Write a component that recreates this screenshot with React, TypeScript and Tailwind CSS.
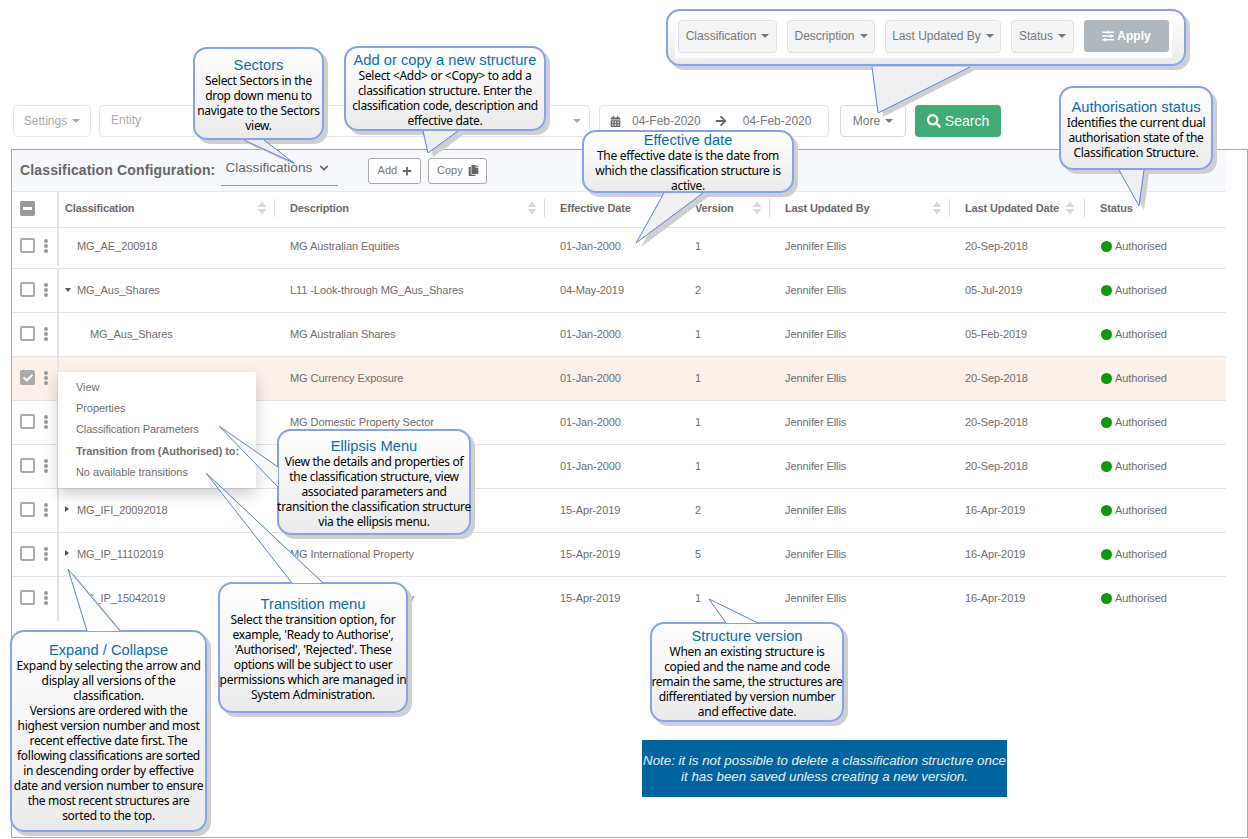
import React from 'react'
import { FaArrowRight, FaCalendarAlt, FaCheck, FaChevronDown, FaCopy, FaPlus, FaSearch, FaSlidersH } from 'react-icons/fa'

const rows = [
  { name: 'MG_AE_200918', indent: 'pl-[18px]', desc: 'MG Australian Equities', eff: '01-Jan-2000', ver: '1', upd: '20-Sep-2018' },
  { name: 'MG_Aus_Shares', arrow: 'down', indent: 'pl-[18px]', desc: 'L11 -Look-through MG_Aus_Shares', eff: '04-May-2019', ver: '2', upd: '05-Jul-2019' },
  { name: 'MG_Aus_Shares', indent: 'pl-[31px]', desc: 'MG Australian Shares', eff: '01-Jan-2000', ver: '1', upd: '05-Feb-2019' },
  { name: '', indent: 'pl-[18px]', desc: 'MG Currency Exposure', eff: '01-Jan-2000', ver: '1', upd: '20-Sep-2018', selected: true },
  { name: '', indent: 'pl-[18px]', desc: 'MG Domestic Property Sector', eff: '01-Jan-2000', ver: '1', upd: '20-Sep-2018' },
  { name: '', indent: 'pl-[18px]', desc: '', eff: '01-Jan-2000', ver: '1', upd: '20-Sep-2018' },
  { name: 'MG_IFI_20092018', arrow: 'right', indent: 'pl-[18px]', desc: '', eff: '15-Apr-2019', ver: '2', upd: '16-Apr-2019' },
  { name: 'MG_IP_11102019', arrow: 'right', indent: 'pl-[18px]', desc: 'MG International Property', eff: '15-Apr-2019', ver: '5', upd: '16-Apr-2019' },
  { name: 'MG_IP_15042019', indent: 'pl-[18px]', desc: 'MG International Property', eff: '15-Apr-2019', ver: '1', upd: '16-Apr-2019' },
]

const gridCols = 'grid grid-cols-[45px_218px_270px_135px_90px_180px_135px_141px]'

function Caret() {
  return <span className="ml-[5px] inline-block h-0 w-0 border-x-[4px] border-t-[4px] border-x-transparent border-t-current align-middle" />
}

function Kebab() {
  return (
    <span className="flex flex-col gap-[1px]">
      <span className="h-[4px] w-[4px] rounded-full bg-[#999]" />
      <span className="h-[4px] w-[4px] rounded-full bg-[#999]" />
      <span className="h-[4px] w-[4px] rounded-full bg-[#999]" />
    </span>
  )
}

function SortIcon() {
  return (
    <svg width="10" height="14" viewBox="0 0 10 14" className="shrink-0">
      <path d="M5 0.5 L9.5 6 L0.5 6 Z M0.5 8 L9.5 8 L5 13.5 Z" fill="#d8d8d8" />
    </svg>
  )
}

function HeaderCell({ label, first, sort = true, sortGap = 'pr-[7px]' }: { label: string; first?: boolean; sort?: boolean; sortGap?: string }) {
  return (
    <div className={`flex h-[35px] items-center pb-[3px] ${first ? 'border-l-2 border-[#e4e4e4] pl-[6px]' : 'pl-[15px]'}`}>
      <div className={`flex h-[18px] flex-1 items-center justify-between ${sort ? 'border-r border-[#dcdcdc]' : ''} ${sortGap}`}>
        <span className="text-[11px] font-bold tracking-[-0.15px] text-[#6b6b6b]">{label}</span>
        {sort && <SortIcon />}
      </div>
    </div>
  )
}

function Tail({ pts, fill, line }: { pts: number[][]; fill: string; line: string }) {
  const [a, b, tip] = pts
  const tri = `${a[0]},${a[1]} ${tip[0]},${tip[1]} ${b[0]},${b[1]}`
  return (
    <svg className="pointer-events-none absolute inset-0 h-[839px] w-[1248px]" viewBox="0 0 1248 839">
      <polygon points={tri} fill={fill} />
      <polyline points={tri} fill="none" stroke={line} strokeWidth="1" />
    </svg>
  )
}

function TailShadow({ pts }: { pts: number[][] }) {
  const s = pts.map((p) => `${p[0] + 5},${p[1] + 4}`).join(' ')
  return (
    <svg className="pointer-events-none absolute inset-0 h-[839px] w-[1248px]" viewBox="0 0 1248 839">
      <polygon points={s} fill="#cfcfcf" />
    </svg>
  )
}

function Callout({ box, title, lines, pts, fill }: { box: string; title: string; lines: string[]; pts: number[][]; fill: string }) {
  return (
    <>
      <TailShadow pts={pts} />
      <div className={`absolute flex flex-col items-center justify-center rounded-[14px] border-2 border-[#86a2ee] bg-linear-to-b from-white to-[#ebebeb] pt-[1px] text-center whitespace-nowrap shadow-[4px_4px_0_#cfcfcf] ${box}`}>
        <div className="pt-[2px] font-['Liberation_Sans',sans-serif] text-[14.7px] leading-[15px] text-[#0a6cb0]">{title}</div>
        {lines.map((l, i) => (
          <div key={i} className="font-['Noto_Sans',sans-serif] text-[12px] leading-[15px] tracking-[-0.3px] text-black">{l}</div>
        ))}
      </div>
      <Tail pts={pts} fill={fill} line="#5b7fe4" />
    </>
  )
}

function FilterButton({ label, className }: { label: string; className: string }) {
  return (
    <div className={`flex h-[33px] items-center justify-center rounded border border-[#dfe1e3] bg-[#f3f4f5] pb-[2px] text-[12px] text-[#777] ${className}`}>
      {label}
      <Caret />
    </div>
  )
}

export default function App() {
  return (
    <div className="relative h-[839px] w-[1248px] overflow-hidden bg-white font-['Liberation_Sans',sans-serif]">
      <div className="flex items-start pl-[13px] pt-[105px]">
        <div className="flex h-[32px] w-[78px] items-center justify-center rounded border border-[#e6e6e6] text-[12px] text-[#aaa]">
          Settings
          <Caret />
        </div>
        <div className="ml-[8px] flex h-[32px] w-[491px] items-center justify-between rounded border border-[#e6e6e6] pl-[11px] pr-[8px] text-[12px] text-[#aaa]">
          <span className="-mt-[2px]">Entity</span>
          <Caret />
        </div>
        <div className="ml-[9px] flex h-[32px] w-[230px] items-center rounded border border-[#e6e6e6] pl-[10px] text-[12px] text-[#777]">
          <FaCalendarAlt className="h-[11px] w-[11px] text-[#666]" />
          <span className="ml-[11px]">04-Feb-2020</span>
          <FaArrowRight className="ml-[14px] h-[12px] w-[12px] text-[#666]" />
          <span className="ml-[16px]">04-Feb-2020</span>
        </div>
        <div className="ml-[11px] flex h-[32px] w-[66px] items-center justify-center rounded border border-[#d8d8d8] text-[12px] text-[#777]">
          More
          <Caret />
        </div>
        <div className="ml-[9px] flex h-[32px] w-[86px] items-center justify-center gap-[4px] rounded bg-[#41ab77] text-[14px] text-white">
          <FaSearch className="h-[14px] w-[14px]" />
          Search
        </div>
      </div>

      <div className="ml-[11px] mt-[12px] h-[689px] border border-[#a9a9a9] pr-[21px]">
        <div className="flex h-[42px] items-center border-b border-[#e8e8e8] bg-[#f7f8fb] pl-[8px]">
          <span className="text-[14px] font-bold tracking-[0.14px] text-[#666]">Classification Configuration:</span>
          <div className="ml-[6px] flex h-[30px] w-[117px] items-center gap-[7px] border-b border-[#999] pb-[4px] pl-[4px] text-[13.6px] text-[#666]">
            Classifications
            <FaChevronDown className="h-[10px] w-[10px]" />
          </div>
          <div className="ml-[30px] flex h-[26px] w-[53px] items-center justify-center gap-[5px] rounded-[3px] border border-[#aaa] bg-white text-[11px] text-[#777]">
            Add
            <FaPlus className="h-[10px] w-[10px] text-[#666]" />
          </div>
          <div className="ml-[7px] flex h-[26px] w-[59px] items-center justify-center gap-[5px] rounded-[3px] border border-[#aaa] bg-white text-[11px] text-[#777]">
            Copy
            <FaCopy className="h-[11px] w-[11px] text-[#666]" />
          </div>
        </div>

        <div className={`${gridCols} border-b border-[#e4e4e4]`}>
          <div className="flex h-[35px] items-center pb-[3px] pl-[8px]">
            <span className="flex h-[15px] w-[15px] items-center justify-center rounded-[2px] bg-[#999]">
              <span className="h-[3px] w-[9px] bg-white" />
            </span>
          </div>
          <HeaderCell first label="Classification" />
          <HeaderCell label="Description" />
          <HeaderCell label="Effective Date" />
          <HeaderCell label="Version" />
          <HeaderCell label="Last Updated By" />
          <HeaderCell label="Last Updated Date" sortGap="pr-[9px]" />
          <HeaderCell label="Status" sort={false} />
        </div>

        {rows.map((r, i) => (
          <div
            key={i}
            className={`${gridCols} text-[11px] tracking-[-0.08px] text-[#6e6e6e] ${i === 0 ? 'h-[41px] pb-[3px]' : 'h-[44px]'} ${i < rows.length - 1 ? 'border-b border-[#e4e4e4]' : 'pb-[1px]'} ${r.selected ? 'bg-[#fbf0ea]' : ''}`}
          >
            <div className="flex items-center gap-[5px] pb-[2px] pl-[8px]">
              {r.selected ? (
                <span className="flex h-[15px] w-[15px] items-center justify-center rounded-[2px] bg-[#aaa]">
                  <FaCheck className="h-[10px] w-[10px] text-white" />
                </span>
              ) : (
                <span className="h-[15px] w-[15px] rounded-[2px] border-2 border-[#aaa] bg-white" />
              )}
              <span className="ml-[4px]">
                <Kebab />
              </span>
            </div>
            <div className={`relative -my-px flex items-center border-l-2 border-[#e4e4e4] ${r.indent}`}>
              {r.arrow === 'down' && (
                <span className="absolute left-[6px] top-[20px] h-0 w-0 border-x-[3px] border-t-[4px] border-x-transparent border-t-[#555]" />
              )}
              {r.arrow === 'right' && (
                <span className="absolute left-[6px] top-[18px] h-0 w-0 border-y-[3px] border-l-[4px] border-y-transparent border-l-[#555]" />
              )}
              {r.name}
            </div>
            <div className="flex items-center pl-[15px]">{r.desc}</div>
            <div className="flex items-center pl-[15px]">{r.eff}</div>
            <div className="flex items-center pl-[15px]">{r.ver}</div>
            <div className="flex items-center pl-[15px]">Jennifer Ellis</div>
            <div className="flex items-center pl-[15px]">{r.upd}</div>
            <div className="flex items-center gap-[3px] pl-[16px]">
              <span className="h-[11px] w-[11px] rounded-full bg-[#0b9a0b]" />
              Authorised
            </div>
          </div>
        ))}
      </div>

      {/* ellipsis menu, open on the selected row */}
      <div className="absolute left-[58px] top-[372px] flex h-[116px] w-[198px] flex-col justify-center bg-white pl-[18px] text-[11px] leading-[21.3px] tracking-[-0.08px] text-[#707070] shadow-[0_6px_14px_rgba(0,0,0,0.2)]">
        <div>View</div>
        <div>Properties</div>
        <div>Classification Parameters</div>
        <div className="font-bold">Transition from (Authorised) to:</div>
        <div>No available transitions</div>
      </div>

      <Callout
        box="left-[193px] top-[47px] h-[93px] w-[131px]"
        title="Sectors"
        lines={['Select Sectors in the', 'drop down menu to', 'navigate to the Sectors', 'view.']}
        pts={[[244, 140], [264, 140], [294, 163]]}
        fill="#eeeeee"
      />
      <Callout
        box="left-[344px] top-[46px] h-[85px] w-[202px]"
        title="Add or copy a new structure"
        lines={['Select <Add> or <Copy> to add a', 'classification structure. Enter the', 'classification code, description and', 'effective date.']}
        pts={[[423, 131], [458, 131], [428, 153]]}
        fill="#eeeeee"
      />
      <Callout
        box="left-[582px] top-[130px] h-[63px] w-[212px]"
        title="Effective date"
        lines={['The effective date is the date from', 'which the classification structure is', 'active.']}
        pts={[[664, 193], [703, 193], [636, 243]]}
        fill="#f0f0f0"
      />
      <Callout
        box="left-[1059px] top-[86px] h-[84px] w-[154px]"
        title="Authorisation status"
        lines={['Identifies the current dual', 'authorisation state of the', 'Classification Structure.']}
        pts={[[1119, 170], [1144, 170], [1139, 206]]}
        fill="#f0f0f0"
      />
      <Callout
        box="left-[277px] top-[429px] h-[106px] w-[194px]"
        title="Ellipsis Menu"
        lines={['View the details and properties of', 'the classification structure, view', 'associated parameters and', 'transition the classification structure', 'via the ellipsis menu.']}
        pts={[[278, 467], [278, 487], [219, 426]]}
        fill="#f8f8f8"
      />
      <Callout
        box="left-[218px] top-[582px] h-[131px] w-[190px]"
        title="Transition menu"
        lines={['Select the transition option, for', "example, 'Ready to Authorise',", "'Authorised', 'Rejected'. These", 'options will be subject to user', 'permissions which are managed in', 'System Administration.']}
        pts={[[292, 583], [323, 583], [206, 473]]}
        fill="#fcfcfc"
      />
      <Callout
        box="left-[10px] top-[630px] h-[202px] w-[197px]"
        title="Expand / Collapse"
        lines={['Expand by selecting the arrow and', 'display all versions of the', 'classification.', 'Versions are ordered with the', 'highest version number and most', 'recent effective date first. The', 'following classifications  are sorted', 'in descending order by effective', 'date and version number to ensure', 'the most recent structures are', 'sorted to the top.']}
        pts={[[87, 631], [120, 631], [68, 569]]}
        fill="#fdfdfd"
      />
      <Callout
        box="left-[650px] top-[622px] h-[100px] w-[194px]"
        title="Structure version"
        lines={['When an existing structure is', 'copied and the name and code', 'remain the same, the structures are', 'differentiated by version number', 'and effective date.']}
        pts={[[726, 623], [758, 623], [709, 599]]}
        fill="#fdfdfd"
      />

      {/* filter bar callout */}
      <TailShadow pts={[[872, 66], [970, 66], [878, 113]]} />
      <div className="absolute left-[666px] top-[9px] flex h-[57px] w-[520px] rounded-[14px] border-2 border-[#86a2ee] bg-linear-to-b from-white to-[#ebebeb] shadow-[4px_4px_0_#cfcfcf]">
        <div className="ml-[7px] mt-[1px] flex h-[46px] w-[497px] items-start gap-[10px] bg-white pl-[3px] pt-[8px]">
          <FilterButton label="Classification" className="w-[99px]" />
          <FilterButton label="Description" className="w-[88px]" />
          <FilterButton label="Last Updated By" className="w-[116px]" />
          <FilterButton label="Status" className="w-[63px]" />
          <div className="flex h-[32px] w-[85px] items-center justify-center gap-[3px] rounded-[3px] bg-[#b1b8bd] text-[12px] font-bold text-white">
            <FaSlidersH className="h-[12px] w-[12px]" />
            Apply
          </div>
        </div>
      </div>
      <Tail pts={[[872, 67], [970, 67], [878, 113]]} fill="#f0f0f0" line="#5b7fe4" />

      <div className="absolute left-[642px] top-[740px] flex h-[57px] w-[365px] flex-col items-center justify-center bg-[#00659f] text-[13.3px] italic leading-[16px] text-[#e8f0f6] whitespace-nowrap">
        <div>Note: it is not possible to delete a classification structure once</div>
        <div>it has been saved unless creating a new version.</div>
      </div>
    </div>
  )
}
